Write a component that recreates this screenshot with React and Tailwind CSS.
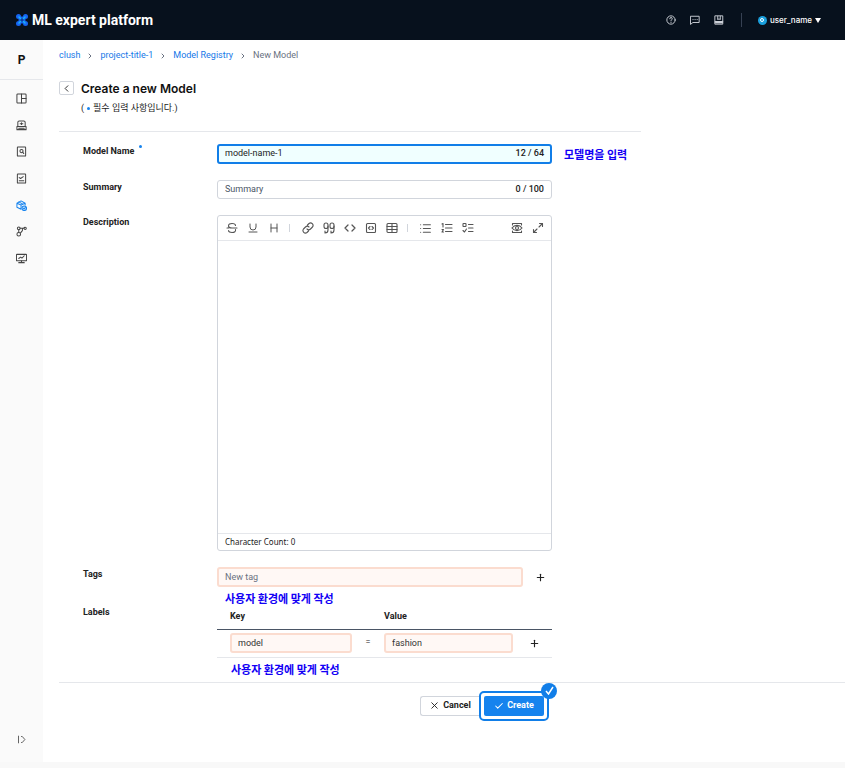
import React, { useState } from 'react';
import {
    ChevronLeft, ChevronRight, Check, X, Plus, Code, Underline, Heading, List,
} from 'lucide-react';

const Svg = ({ children, size = 12, className = '' }) => (
    <svg width={size} height={size} viewBox="0 0 24 24" fill="none" stroke="currentColor"
        strokeWidth="2.2" strokeLinecap="round" strokeLinejoin="round" className={className} aria-hidden="true">
        {children}
    </svg>
)

const Logo = () => (
    <svg width="14" height="14" viewBox="0 0 28 28" aria-hidden="true">
        <g fill="#1765f2">
            <circle cx="7" cy="7" r="5" />
            <circle cx="21" cy="7" r="5" />
            <circle cx="7" cy="21" r="5" />
            <circle cx="21" cy="21" r="5" />
            <rect x="7" y="7" width="14" height="14" />
        </g>
        <circle cx="14" cy="14" r="3.5" fill="#0b3fa0" />
        <path d="M8 8l3 3M20 8l-3 3M8 20l3-3M20 20l-3-3" stroke="#19b4f5" strokeWidth="3" strokeLinecap="round" />
    </svg>
)

const menu = [
    { name: 'Dashboard', icon: <><rect x="2" y="2" width="20" height="20" rx="2" /><path d="M12 2v20M12 12h10" /></> },
    { name: 'Dataset', icon: <><path d="M4 14V5c0-2 1-3 3-3h10c2 0 3 1 3 3v9M2 14h20v7H2zM12 6v4M9 8h6M6 18h12" /></> },
    { name: 'Explore', icon: <><rect x="3" y="2" width="18" height="20" rx="1" /><circle cx="12" cy="11" r="3.500" /><path d="m14.500 13.500 2.500 3" /></> },
    { name: 'Experiment', icon: <><rect x="3" y="2" width="18" height="20" rx="1" /><path d="m7 10 3 2 6-4M7 17h10" /></> },
    {
        name: 'Model Registry', active: true,
        icon: <><path d="M11 20 2 16V7l9-5 9 5v4M2 7l9 4 9-4M11 11v9M6 4l9 5" /><circle cx="18" cy="18" r="5" fill="#bfe0ff" /><path d="m16 18 1.500 1.500 3-3" /></>,
    },
    { name: 'Pipeline', icon: <><circle cx="6" cy="5" r="3" /><circle cx="20" cy="5" r="2.500" /><circle cx="6" cy="18" r="4" /><path d="M9 5h8M6 8v6M14 5v5l-4 5" /></> },
    { name: 'Monitoring', icon: <><rect x="1" y="3" width="22" height="14" rx="1" /><path d="M12 17v4M6 21h12M6 12l4-3 3 2 5-5" /></> },
]

const tools = [
    { name: 'Strikethrough', icon: <Svg><path d="M19 7c0-3-3-4-7-4s-7 1-7 5c0 3 3 4 7 4h10M2 12h3M19 15c1 4-2 6-7 6-4 0-7-1-7-4" /></Svg> },
    { name: 'Underline', icon: <Underline size={12} /> },
    { name: 'Heading', icon: <Heading size={12} /> },
    null,
    { name: 'Link', icon: <Svg><path d="M10 14a5 5 0 0 0 7 0l4-4a5 5 0 0 0-7-7l-3 3M14 10a5 5 0 0 0-7 0l-4 4a5 5 0 0 0 7 7l3-3" /></Svg> },
    { name: 'Quote', icon: <Svg><rect x="2" y="2" width="8" height="11" rx="4" /><path d="M10 8v8c0 4-2 6-6 6v-4" /><rect x="14" y="2" width="8" height="11" rx="4" /><path d="M22 8v8c0 4-2 6-6 6v-4" /></Svg> },
    { name: 'Code', icon: <Code size={12} strokeWidth={2.5} /> },
    { name: 'Code block', icon: <Svg><rect x="3" y="3" width="18" height="18" rx="2" /><path d="m10 9-3 3 3 3M14 9l3 3-3 3" /></Svg> },
    { name: 'Table', icon: <Svg><rect x="2" y="3" width="20" height="18" rx="2" /><path d="M2 9h20M2 15h20M12 3v18" /></Svg> },
    null,
    { name: 'Bullet list', icon: <List size={13} /> },
    { name: 'Numbered list', icon: <Svg><path d="M9 5h13M9 12h13M9 19h13M2 4l2-1v7M2 15h3l-3 5h3" /></Svg> },
    { name: 'Check list', icon: <Svg><rect x="2" y="3" width="6" height="6" rx="1" /><path d="M13 5h9M13 12h9M13 19h9M2 17l3 3 4-6" /></Svg> },
]

const views = [
    { name: 'Preview', icon: <Svg><path d="M3 6V3h18v3M3 18v3h18v-3M2 12c5-7 15-7 20 0-5 7-15 7-20 0" /><circle cx="12" cy="12" r="3" /></Svg> },
    { name: 'Full screen', icon: <Svg><path d="M15 3h6v6M21 3l-7 7M9 21H3v-6M3 21l7-7" /></Svg> },
]

const ToolButton = ({ tool }) => (
    <button type="button" aria-label={tool.name} className="flex h-6 w-[21px] items-center justify-center">
        {tool.icon}
    </button>
)

const Header = () => (
    <header className="flex h-10 items-center justify-between bg-[#07111d] pr-6 pl-[15px] text-white">
        <div className="flex items-center gap-[3px]">
            <Logo />
            <span className="font-['Roboto',sans-serif] text-[14px] font-bold">ML expert platform</span>
        </div>
        <div className="flex items-center gap-3">
            <button type="button" aria-label="Help" className="flex w-3 justify-center text-gray-300">
                <Svg size={10}><circle cx="12" cy="12" r="10" /><path d="M9 9a3 3 0 0 1 6 0c0 2-3 2-3 5M12 17.500v.5" /></Svg>
            </button>
            <button type="button" aria-label="Messages" className="flex w-3 justify-center text-gray-300">
                <Svg size={10}><path d="M2 3h20v15H7l-5 4zM7 11h.5M12 11h.5M17 11h.5" /></Svg>
            </button>
            <button type="button" aria-label="Documents" className="flex w-3 justify-center text-gray-300">
                <Svg size={10}><path d="M3 2h18v20H3zM9 3v7M15 3v7M9 10h6M3 16h18" /><path d="M4 16h16v3H4z" fill="currentColor" /></Svg>
            </button>
            <span className="mx-1 h-3.5 w-px bg-gray-700" />
            <button type="button" className="flex items-center gap-[3px] font-['Inter',sans-serif] text-[8px] font-medium">
                <span className="flex size-[9px] items-center justify-center rounded-full bg-[#1a9fdc]">
                    <span className="size-1 rounded-full border border-white" />
                </span>
                user_name
                <svg width="6" height="5" viewBox="0 0 6 5" fill="currentColor" aria-hidden="true"><path d="M0 0h6L3 5z" /></svg>
            </button>
        </div>
    </header>
)

const Sidebar = () => (
    <nav className="flex w-[43px] shrink-0 flex-col items-center bg-[#fafafa] text-[#444]">
        <div className="flex h-10 w-full items-center justify-center border-b border-gray-200 text-[12px] font-bold text-[#111]">P</div>
        <div className="mt-[13px] flex h-[171px] flex-col justify-between">
            {menu.map((item) => (
                <a key={item.name} href="#" aria-label={item.name} className={item.active ? 'text-[#1683ee]' : ''}>
                    <Svg size={11}>{item.icon}</Svg>
                </a>
            ))}
        </div>
        <button type="button" aria-label="Expand menu" className="mt-auto mb-[18px]">
            <Svg size={9}><path d="M4 3v18M12 4h2l7 8-7 8h-2" /></Svg>
        </button>
    </nav>
)

const Note = ({ children, className = '' }) => (
    <p className={`font-['Noto_Sans_CJK_KR',sans-serif] text-[11px] leading-[14px] font-bold whitespace-nowrap text-[#1200f5] ${className}`}>{children}</p>
)

const labelStyle = "w-[134px] shrink-0 text-[9px] leading-[14px] font-bold text-[#222]"
const tagStyle = "h-5 w-full min-w-0 rounded-[3px] border-2 border-[#fbdccf] bg-[#fff8f5] px-1.5 text-[9px] text-[#333] outline-none placeholder:text-gray-500"

const App = () => {
    const [name, setName] = useState('model-name-1')
    const [summary, setSummary] = useState('')
    const [description, setDescription] = useState('')

    return (
        <div className="flex min-h-screen flex-col bg-white font-['Roboto','Noto_Sans_CJK_KR',sans-serif] text-[#222]">
            <Header />
            <div className="flex grow">
                <Sidebar />
                <main className="min-w-0 grow pl-4">
                    <nav aria-label="Breadcrumb" className="flex h-8 items-center gap-1.5 text-[9px] text-[#1677e8]">
                        <a href="#">clush</a>
                        <ChevronRight size={8} strokeWidth={3} className="text-gray-500" />
                        <a href="#">project-title-1</a>
                        <ChevronRight size={8} strokeWidth={3} className="text-gray-500" />
                        <a href="#">Model Registry</a>
                        <ChevronRight size={8} strokeWidth={3} className="text-gray-500" />
                        <span className="text-gray-500">New Model</span>
                    </nav>

                    <div className="flex max-w-[582px] gap-[7px] border-b border-gray-200 pt-[9px] pb-4">
                        <button type="button" aria-label="Back" className="flex h-3.5 w-[15px] items-center justify-center rounded-xs border border-gray-300">
                            <ChevronLeft size={11} />
                        </button>
                        <div>
                            <h1 className="font-['Inter',sans-serif] text-[12px] leading-4 font-semibold text-[#111]">Create a new Model</h1>
                            <p className="mt-1 flex items-center text-[9px] leading-[14px]">
                                (<span className="mx-[3px] size-[3px] rounded-full bg-[#1683ee]" />필수 입력 사항입니다.)
                            </p>
                        </div>
                    </div>

                    <form onSubmit={(e) => e.preventDefault()}>
                        {/* Fields */}
                        <div className="pt-3 pl-6">
                            <div className="flex">
                                <label htmlFor="name" className={labelStyle}>
                                    Model Name <span className="mb-1.5 ml-0.5 inline-block size-[3px] rounded-full bg-[#1683ee]" />
                                </label>
                                <div className="flex h-5 w-[335px] items-center rounded-[3px] border-2 border-[#117ee8] bg-[#f0ffff] px-1.5 text-[9px]">
                                    <input id="name" maxLength={64} value={name} onChange={(e) => setName(e.target.value)}
                                        className="min-w-0 grow outline-none" />
                                    <span className="font-medium">{name.length} / 64</span>
                                </div>
                                <Note className="mt-[3px] ml-3">모델명을 입력</Note>
                            </div>

                            <div className="mt-4 flex">
                                <label htmlFor="summary" className={labelStyle}>Summary</label>
                                <div className="flex h-[19px] w-[335px] items-center rounded-[3px] border border-gray-300 px-[7px] text-[9px]">
                                    <input id="summary" maxLength={100} placeholder="Summary" value={summary}
                                        onChange={(e) => setSummary(e.target.value)}
                                        className="min-w-0 grow outline-none placeholder:text-gray-600" />
                                    <span className="font-medium">{summary.length} / 100</span>
                                </div>
                            </div>

                            <div className="mt-4 flex">
                                <label htmlFor="description" className={labelStyle}>Description</label>
                                <div className="w-[335px] rounded-[3px] border border-gray-300">
                                    <div className="flex items-center border-b border-gray-200 px-[3px] text-[#555]">
                                        {tools.map((tool, i) => tool
                                            ? <ToolButton key={tool.name} tool={tool} />
                                            : <span key={i} className="mr-[7px] ml-[5px] h-2 w-px bg-gray-300" />
                                        )}
                                        <div className="ml-auto flex">
                                            {views.map((tool) => <ToolButton key={tool.name} tool={tool} />)}
                                        </div>
                                    </div>
                                    <textarea id="description" value={description} onChange={(e) => setDescription(e.target.value)}
                                        className="block h-[292px] w-full resize-none px-2 py-1 text-[9px] outline-none" />
                                    <p className="border-t border-gray-200 px-[7px] font-['Noto_Sans',sans-serif] text-[8px] leading-4">
                                        Character Count: {description.length}
                                    </p>
                                </div>
                            </div>

                            <div className="mt-4 flex">
                                <label htmlFor="tag" className={labelStyle}>Tags</label>
                                <div className="w-[335px]">
                                    <div className="flex items-center">
                                        <input id="tag" placeholder="New tag" className={tagStyle} />
                                        <button type="button" aria-label="Add tag" className="mr-1.5 ml-3"><Plus size={11} strokeWidth={2.5} /></button>
                                    </div>
                                    <Note className="mt-1 pl-2">사용자 환경에 맞게 작성</Note>
                                </div>
                            </div>

                            <div className="flex">
                                <span className={labelStyle}>Labels</span>
                                <div className="w-[335px]">
                                    <table className="w-full table-fixed text-left text-[9px]">
                                        <thead>
                                            <tr className="h-6 border-b border-gray-600">
                                                <th className="w-[135px] pl-[13px]">Key</th>
                                                <th className="w-8" />
                                                <th className="w-[129px]">Value</th>
                                                <th />
                                            </tr>
                                        </thead>
                                        <tbody>
                                            <tr className="h-7 border-b border-gray-200">
                                                <td className="pl-[13px]"><input aria-label="Key" defaultValue="model" className={tagStyle} /></td>
                                                <td className="text-center">=</td>
                                                <td><input aria-label="Value" defaultValue="fashion" className={tagStyle} /></td>
                                                <td>
                                                    <button type="button" aria-label="Add label" className="ml-4 flex"><Plus size={11} strokeWidth={2.5} /></button>
                                                </td>
                                            </tr>
                                        </tbody>
                                    </table>
                                    <Note className="mt-1 pl-3.5">사용자 환경에 맞게 작성</Note>
                                </div>
                            </div>
                        </div>

                        {/* Buttons */}
                        <div className="mt-1.5 border-t border-gray-200 pt-2">
                            <div className="flex max-w-[490px] items-center justify-end text-[9px] font-bold">
                                <button type="button" className="flex h-5 w-[59px] items-center justify-center gap-[3px] rounded-l-[3px] border border-r-0 border-gray-300">
                                    <X size={11} /> Cancel
                                </button>
                                <div className="relative rounded-[5px] border-2 border-[#117ee8] bg-white p-[3px]">
                                    <button type="submit" className="flex h-5 w-[60px] items-center justify-center gap-[3px] rounded-xs bg-[#1683ee] text-white">
                                        <Check size={10} strokeWidth={2.5} /> Create
                                    </button>
                                    <span className="absolute -top-2.5 -right-2.5 flex size-4 items-center justify-center rounded-full bg-[#117ee8] text-white">
                                        <svg width="9" height="9" viewBox="0 0 9 9" fill="none" stroke="currentColor" strokeWidth="1.500" aria-hidden="true"><path d="M1 5l2.500 3L8 1" /></svg>
                                    </span>
                                </div>
                            </div>
                        </div>
                    </form>
                </main>
            </div>
            <footer className="h-1.5 bg-[#f8f8f8]" />
        </div>
    )
}

export default App;
